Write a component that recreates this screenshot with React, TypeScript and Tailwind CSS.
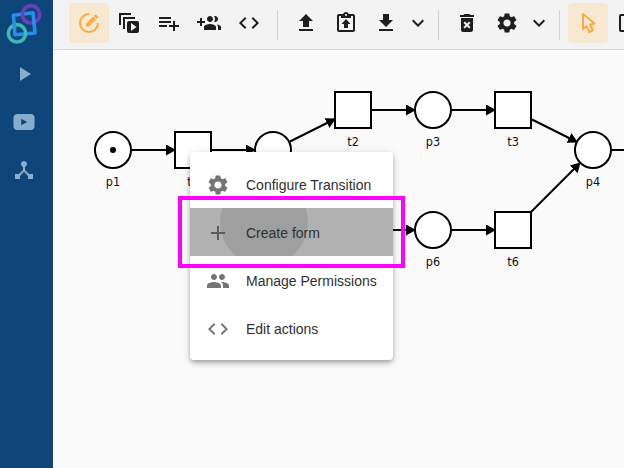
import React from 'react';

const GEAR =
  'M19.14 12.94c.04-.3.06-.61.06-.94 0-.32-.02-.64-.07-.94l2.03-1.58c.18-.14.23-.41.12-.61l-1.92-3.32c-.12-.22-.37-.29-.59-.22l-2.39.96c-.5-.38-1.03-.7-1.62-.94l-.36-2.54c-.04-.24-.24-.41-.48-.41h-3.84c-.24 0-.43.17-.47.41l-.36 2.54c-.59.24-1.13.57-1.62.94l-2.39-.96c-.22-.08-.47 0-.59.22L2.74 8.87c-.12.21-.08.47.12.61l2.03 1.58c-.05.3-.09.63-.09.94s.02.64.07.94l-2.03 1.58c-.18.14-.23.41-.12.61l1.92 3.32c.12.22.37.29.59.22l2.39-.96c.5.38 1.03.7 1.62.94l.36 2.54c.05.24.24.41.48.41h3.84c.24 0 .44-.17.47-.41l.36-2.54c.59-.24 1.13-.56 1.62-.94l2.39.96c.22.08.47 0 .59-.22l1.92-3.32c.12-.22.07-.47-.12-.61l-2.01-1.58zM12 15.6c-1.98 0-3.6-1.62-3.6-3.6s1.62-3.6 3.6-3.6 3.6 1.62 3.6 3.6-1.62 3.6-3.6 3.6z';
const CODE =
  'M9.4 16.6L4.8 12l4.6-4.6L8 6l-6 6 6 6 1.4-1.4zm5.2 0l4.6-4.6-4.6-4.6L16 6l6 6-6 6-1.4-1.4z';
const CHEVRON = 'M7.41 8.59L12 13.17l4.59-4.58L18 10l-6 6-6-6 1.41-1.41z';
const GROUP =
  'M16 11c1.66 0 2.99-1.34 2.99-3S17.66 5 16 5s-3 1.34-3 3 1.34 3 3 3zm-8 0c1.66 0 2.99-1.34 2.99-3S9.66 5 8 5 5 6.34 5 8s1.34 3 3 3zm0 2c-2.33 0-7 1.17-7 3.5V19h14v-2.5c0-2.33-4.67-3.5-7-3.5zm8 0c-.29 0-.62.02-.97.05 1.16.84 1.97 1.97 1.97 3.45V19h6v-2.5c0-2.33-4.67-3.5-7-3.5z';

function Icon({ d }: { d: string }) {
  return (
    <svg width="24" height="24" viewBox="0 0 24 24" fill="currentColor" fillRule="evenodd" className="shrink-0">
      <path d={d} />
    </svg>
  );
}

function Tool({ children, active = false }: { children: React.ReactNode; active?: boolean }) {
  return (
    <button
      className={
        active
          ? 'flex size-10 shrink-0 items-center justify-center rounded bg-[#f7e8d2] text-[#ffa83f]'
          : 'flex size-10 shrink-0 items-center justify-center text-[#1e1e1e]'
      }
    >
      {children}
    </button>
  );
}

function Expand() {
  return (
    <button className="flex h-10 w-6 shrink-0 items-center justify-center text-[#1e1e1e]">
      <Icon d={CHEVRON} />
    </button>
  );
}

function Divider() {
  return <div className="mx-2 mt-[7px] h-[30px] w-px shrink-0 bg-[#d2d2d2]" />;
}

function Toolbar() {
  return (
    <header className="flex h-[50px] shrink-0 items-start overflow-hidden border-b border-[#d6d6d6] bg-[#f3f3f3] pt-[3px] pl-4">
      <Tool active>
        <svg width="24" height="24" viewBox="0 0 24 24" fill="none" stroke="currentColor" strokeWidth="2">
          <path d="M12 3A9 9 0 1 0 21 12" />
          <path d="M9 15.6V12.7L16 5.7 18.9 8.6 11.9 15.6Z" fill="currentColor" stroke="none" />
          <path d="M16.7 5l1.3-1.3a.9.9 0 0 1 1.2 0l1.7 1.7a.9.9 0 0 1 0 1.2L19.6 7.9z" fill="currentColor" stroke="none" />
        </svg>
      </Tool>
      <Tool>
        <svg width="24" height="24" viewBox="0 0 24 24" fill="none" stroke="currentColor" strokeWidth="2">
          <path d="M3 14V3h11M7 18V7h11" />
          <path
            d="M12 10h8a2 2 0 0 1 2 2v8a2 2 0 0 1-2 2h-8a2 2 0 0 1-2-2v-8a2 2 0 0 1 2-2zM14 12v8l5.5-4z"
            fill="currentColor"
            fillRule="evenodd"
            stroke="none"
          />
        </svg>
      </Tool>
      <Tool>
        <Icon d="M14 10H2v2h12v-2zm0-4H2v2h12V6zM2 16h8v-2H2v2zM16 14v-4h2v4h4v2h-4v4h-2v-4h-4v-2z" />
      </Tool>
      <Tool>
        <Icon d="M8 10H5V7H3v3H0v2h3v3h2v-3h3v-2zm10 1c1.66 0 2.99-1.34 2.99-3S19.66 5 18 5c-.32 0-.63.05-.91.14.57.81.9 1.79.9 2.86s-.34 2.04-.9 2.86c.28.09.59.14.91.14zm-5 0c1.66 0 2.99-1.34 2.99-3S14.66 5 13 5s-3 1.34-3 3 1.34 3 3 3zm6.62 2.16c.83.73 1.38 1.66 1.38 2.84v3h3v-3c0-1.54-2.37-2.49-4.38-2.84zM13 13c-2 0-6 1-6 3v3h12v-3c0-2-4-3-6-3z" />
      </Tool>
      <Tool>
        <Icon d={CODE} />
      </Tool>
      <Divider />
      <Tool>
        <Icon d="M5 20h14v-2H5v2zm0-10h4v6h6v-6h4l-7-7-7 7z" />
      </Tool>
      <Tool>
        <Icon d="M19 3h-4.18C14.4 1.84 13.3 1 12 1s-2.4.84-2.82 2H5c-1.1 0-2 .9-2 2v14c0 1.1.9 2 2 2h14c1.1 0 2-.9 2-2V5c0-1.1-.9-2-2-2zm-7 0c.55 0 1 .45 1 1s-.45 1-1 1-1-.45-1-1 .45-1 1-1zm7 16H5V5h2v2h10V5h2v14zM12 8l-4.5 5H10v4h4v-4h2.5z" />
      </Tool>
      <Tool>
        <Icon d="M5 20h14v-2H5v2zM19 9h-4V3H9v6H5l7 7 7-7z" />
      </Tool>
      <Expand />
      <Divider />
      <Tool>
        <Icon d="M6 19c0 1.1.9 2 2 2h8c1.1 0 2-.9 2-2V7H6v12zm2.46-7.12l1.41-1.41L12 12.59l2.12-2.12 1.41 1.41L13.41 14l2.12 2.12-1.41 1.41L12 15.41l-2.12 2.12-1.41-1.41L10.59 14l-2.13-2.12zM15.5 4l-1-1h-5l-1 1H5v2h14V4z" />
      </Tool>
      <Tool>
        <Icon d={GEAR} />
      </Tool>
      <Expand />
      <Divider />
      <Tool active>
        <Icon d="M10.07 14.27C10.57 14.03 11.16 14.25 11.4 14.75L13.7 19.74L15.5 18.89L13.19 13.91C12.95 13.41 13.17 12.81 13.67 12.58L13.95 12.5L16.25 12.05L8 5.12V15.9L9.82 14.43L10.07 14.27M13.64 21.97C13.14 22.21 12.54 22 12.31 21.5L10.13 16.76L7.62 18.78C7.45 18.92 7.24 19 7 19A1 1 0 0 1 6 18V3A1 1 0 0 1 7 2C7.24 2 7.47 2.09 7.64 2.23L7.65 2.22L19.14 11.86C19.57 12.22 19.62 12.85 19.27 13.27C19.12 13.45 18.91 13.57 18.7 13.61L15.54 14.23L17.74 18.96C18 19.46 17.76 20.05 17.26 20.28L13.64 21.97Z" />
      </Tool>
      <Tool>
        <svg width="24" height="24" viewBox="0 0 24 24" fill="none" stroke="currentColor" strokeWidth="2">
          <rect x="4" y="4" width="16" height="16" rx="1" />
        </svg>
      </Tool>
    </header>
  );
}

function Sidebar() {
  return (
    <aside className="flex w-[53px] shrink-0 flex-col items-center bg-[#0f467a] pr-[5px] text-[#86adcb]">
      <svg width="48" height="50" viewBox="0 0 48 50" fill="none" strokeWidth="3.6" className="shrink-0">
        <circle cx="31" cy="14.3" r="8.7" stroke="#6a3fb8" />
        <path d="M13.4 15.2L33 12.8 35 33 15 34.8Z" stroke="#2a8cec" strokeLinejoin="round" />
        <circle cx="17" cy="33.3" r="8.7" stroke="#3fb9b4" />
        <path d="M23 11A8.7 8.7 0 0 0 27.5 22.3" stroke="#6a3fb8" />
        <path d="M14.6 27.4L14.1 22" stroke="#2a8cec" />
      </svg>
      <nav className="flex flex-col gap-6 pt-3">
        <Icon d="M8 5v14l11-7z" />
        <Icon d="M5 4h14A3.5 3.5 0 0 1 22.5 8v8a4 4 0 0 1-4 4h-13A4 4 0 0 1 1.5 16V8A4 4 0 0 1 5 4zM9.2 8.8v6.4l6-3.2z" />
        <Icon d="M17 16l-4-4V8.82C14.16 8.4 15 7.3 15 6c0-1.66-1.34-3-3-3S9 4.34 9 6c0 1.3.84 2.4 2 2.82V12l-4 4H3v5h5v-3.05l4-4.2 4 4.2V21h5v-5h-4z" />
      </nav>
    </aside>
  );
}

const places = [
  { x: 60, y: 100, label: 'p1' },
  { x: 220, y: 100, label: '' },
  { x: 380, y: 60, label: 'p3' },
  { x: 540, y: 100, label: 'p4' },
  { x: 380, y: 180, label: 'p6' },
];
const transitions = [
  { x: 140, y: 100, label: 't1' },
  { x: 300, y: 60, label: 't2' },
  { x: 460, y: 60, label: 't3' },
  { x: 460, y: 180, label: 't6' },
];
const arcs = [
  [79, 100, 122, 100],
  [159, 100, 202, 100],
  [237, 91.5, 282, 69],
  [319, 60, 362, 60],
  [399, 60, 442, 60],
  [479, 69.5, 524, 92],
  [319, 180, 362, 180],
  [399, 180, 442, 180],
  [478, 162, 527, 113],
  [559, 100, 602, 100],
];

function PetriNet() {
  return (
    <svg width="571" height="418" viewBox="0 0 571 418" className="block">
      <defs>
        <marker id="arrow" markerWidth="10" markerHeight="11" refX="9" refY="5.5" orient="auto" markerUnits="userSpaceOnUse">
          <path d="M0 0L10 5.5 0 11Z" fill="#000" />
        </marker>
      </defs>
      {places.map((p) => (
        <circle key={p.x + '-' + p.y} cx={p.x} cy={p.y} r="18" fill="#fff" stroke="#000" strokeWidth="2" />
      ))}
      {transitions.map((t) => (
        <rect key={t.label} x={t.x - 18} y={t.y - 18} width="36" height="36" fill="#fff" stroke="#000" strokeWidth="2" />
      ))}
      {arcs.map(([x1, y1, x2, y2]) => (
        <line key={x1 + '-' + y1} x1={x1} y1={y1} x2={x2} y2={y2} stroke="#000" strokeWidth="2" markerEnd="url(#arrow)" />
      ))}
      <circle cx="60" cy="100" r="3" fill="#000" />
      {[...places, ...transitions]
        .filter((n) => n.label)
        .map((n) => (
          <text
            key={n.label}
            x={n.x}
            y={n.y + 36}
            textAnchor="middle"
            className="fill-[#111] font-['DejaVu_Sans_Condensed','DejaVu_Sans',sans-serif] text-[12.5px]"
          >
            {n.label}
          </text>
        ))}
    </svg>
  );
}

const menuItems = [
  { label: 'Configure Transition', d: GEAR },
  { label: 'Create form', d: 'M19 13h-6v6h-2v-6H5v-2h6V5h2v6h6v2z', pressed: true },
  { label: 'Manage Permissions', d: GROUP },
  { label: 'Edit actions', d: CODE },
];

function ContextMenu() {
  return (
    <div className="absolute top-[152px] left-[190px] w-[203px] rounded bg-white py-2 shadow-[0_2px_4px_-1px_rgba(0,0,0,0.2),0_4px_5px_rgba(0,0,0,0.14),0_1px_10px_rgba(0,0,0,0.12)]">
      {menuItems.map((item) => (
        <div
          key={item.label}
          className={
            item.pressed
              ? 'relative flex h-12 items-center gap-4 overflow-hidden bg-[#b1b1b1] px-4 pt-0.5 text-[#5c5c5c]'
              : 'flex h-12 items-center gap-4 px-4 pt-0.5 text-[#757575]'
          }
        >
          {item.pressed && <span className="absolute -top-[30px] left-[30px] size-[88px] rounded-full bg-[#9f9f9f]" />}
          <span className="relative flex">
            <Icon d={item.d} />
          </span>
          <span className="relative text-[14px] whitespace-nowrap text-[#303030]">{item.label}</span>
        </div>
      ))}
    </div>
  );
}

export default function App() {
  return (
    <div className="relative flex h-[468px] w-[624px] overflow-hidden bg-[#fafafa] font-['Liberation_Sans',Arial,sans-serif]">
      <Sidebar />
      <main className="flex min-w-0 flex-1 flex-col">
        <Toolbar />
        <PetriNet />
      </main>
      <ContextMenu />
      <div className="absolute top-[196px] left-[178px] h-[72px] w-[227px] border-4 border-[#ff00ff]" />
    </div>
  );
}
